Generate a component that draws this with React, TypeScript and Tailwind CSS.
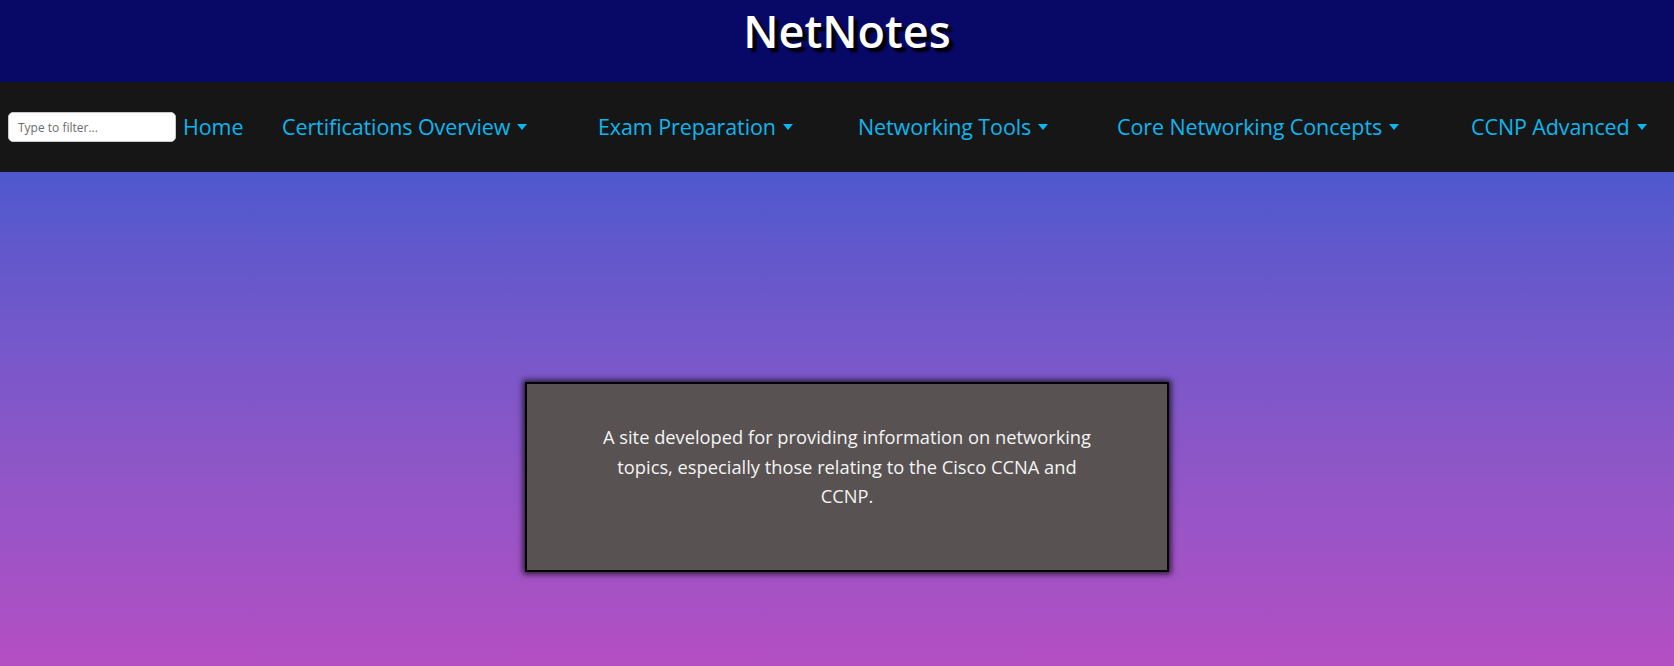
import { useState } from "react";

const navItems = [
  { label: "Home", width: "w-[99px]", dropdown: false },
  { label: "Certifications Overview", width: "w-[316px]", dropdown: true },
  { label: "Exam Preparation", width: "w-[260px]", dropdown: true },
  { label: "Networking Tools", width: "w-[259px]", dropdown: true },
  { label: "Core Networking Concepts", width: "w-[354px]", dropdown: true },
  { label: "CCNP Advanced", width: "w-[200px]", dropdown: true },
];

function Caret() {
  return (
    <span className="ml-[7px] inline-block h-0 w-0 translate-y-[-2px] border-x-[5.5px] border-t-[6px] border-x-transparent border-t-current align-middle" />
  );
}

export default function App() {
  const [filter, setFilter] = useState("");

  return (
    <div className="min-h-[666px] w-full font-['Open_Sans',sans-serif]">
      <header className="flex h-[82px] justify-center bg-[#080866] pl-[20px] pt-[1px]">
        <h1 className="text-[45px] font-semibold leading-[60px] text-white [text-shadow:4px_4px_2px_#000]">
          NetNotes
        </h1>
      </header>

      <nav className="flex h-[90px] items-center bg-[#161616] pl-[8px]">
        <input
          type="text"
          value={filter}
          onChange={(e) => setFilter(e.target.value)}
          placeholder="Type to filter..."
          className="h-[30px] w-[168px] rounded-[5px] border border-[#c8c8c8] bg-white px-[9px] text-[12px] text-[#333] placeholder:text-[#6c6c6c] focus:outline-none"
        />
        <ul className="ml-[7px] flex items-center">
          {navItems.map((item) => (
            <li key={item.label} className={item.width}>
              <a
                href="#"
                className="whitespace-nowrap text-[21.5px] leading-[30px] tracking-[-0.1px] text-[#0db6f0]"
              >
                {item.label}
                {item.dropdown && <Caret />}
              </a>
            </li>
          ))}
        </ul>
      </nav>

      <main className="flex h-[494px] justify-center bg-gradient-to-b from-[#4e58cd] to-[#b44ec3] pl-[20px]">
        <div className="mt-[210px] h-[190px] w-[644px] border-2 border-black bg-[#585352] px-[40px] pt-[38px] text-center shadow-[0_0_6px_2px_rgba(0,0,0,0.75)]">
          <p className="text-[18.3px] leading-[29.5px] text-[#f4f4f4]">
            A site developed for providing information on networking
            <br />
            topics, especially those relating to the Cisco CCNA and
            <br />
            CCNP.
          </p>
        </div>
      </main>
    </div>
  );
}
